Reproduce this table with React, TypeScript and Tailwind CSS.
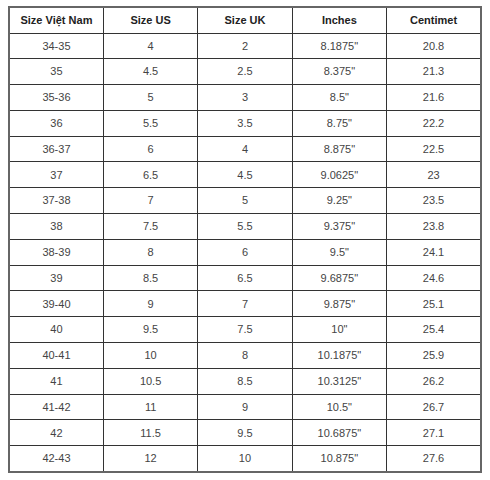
const HEADERS = ['Size Việt Nam', 'Size US', 'Size UK', 'Inches', 'Centimet']

const ROWS: string[][] = [
  ['34-35', '4', '2', '8.1875"', '20.8'],
  ['35', '4.5', '2.5', '8.375"', '21.3'],
  ['35-36', '5', '3', '8.5"', '21.6'],
  ['36', '5.5', '3.5', '8.75"', '22.2'],
  ['36-37', '6', '4', '8.875"', '22.5'],
  ['37', '6.5', '4.5', '9.0625"', '23'],
  ['37-38', '7', '5', '9.25"', '23.5'],
  ['38', '7.5', '5.5', '9.375"', '23.8'],
  ['38-39', '8', '6', '9.5"', '24.1'],
  ['39', '8.5', '6.5', '9.6875"', '24.6'],
  ['39-40', '9', '7', '9.875"', '25.1'],
  ['40', '9.5', '7.5', '10"', '25.4'],
  ['40-41', '10', '8', '10.1875"', '25.9'],
  ['41', '10.5', '8.5', '10.3125"', '26.2'],
  ['41-42', '11', '9', '10.5"', '26.7'],
  ['42', '11.5', '9.5', '10.6875"', '27.1'],
  ['42-43', '12', '10', '10.875"', '27.6'],
]

export default function App() {
  return (
    <div className="w-[490px] h-[480px] bg-white pl-[8px] pt-[6px] font-['Liberation_Sans',Arial,sans-serif]">
      <table className="w-[474px] table-fixed border-collapse border-2 border-[#666]">
        <thead>
          <tr className="h-[26px]">
            {HEADERS.map((h) => (
              <th key={h} className="border border-[#333] text-center align-middle text-[11px] font-bold text-[#222] p-0">
                {h}
              </th>
            ))}
          </tr>
        </thead>
        <tbody>
          {ROWS.map((r) => (
            <tr key={r[0]} className="h-[25.8px]">
              {r.map((c, i) => (
                <td key={i} className="border border-[#333] text-center align-middle text-[11px] text-[#444] p-0">
                  {c}
                </td>
              ))}
            </tr>
          ))}
        </tbody>
      </table>
    </div>
  )
}
